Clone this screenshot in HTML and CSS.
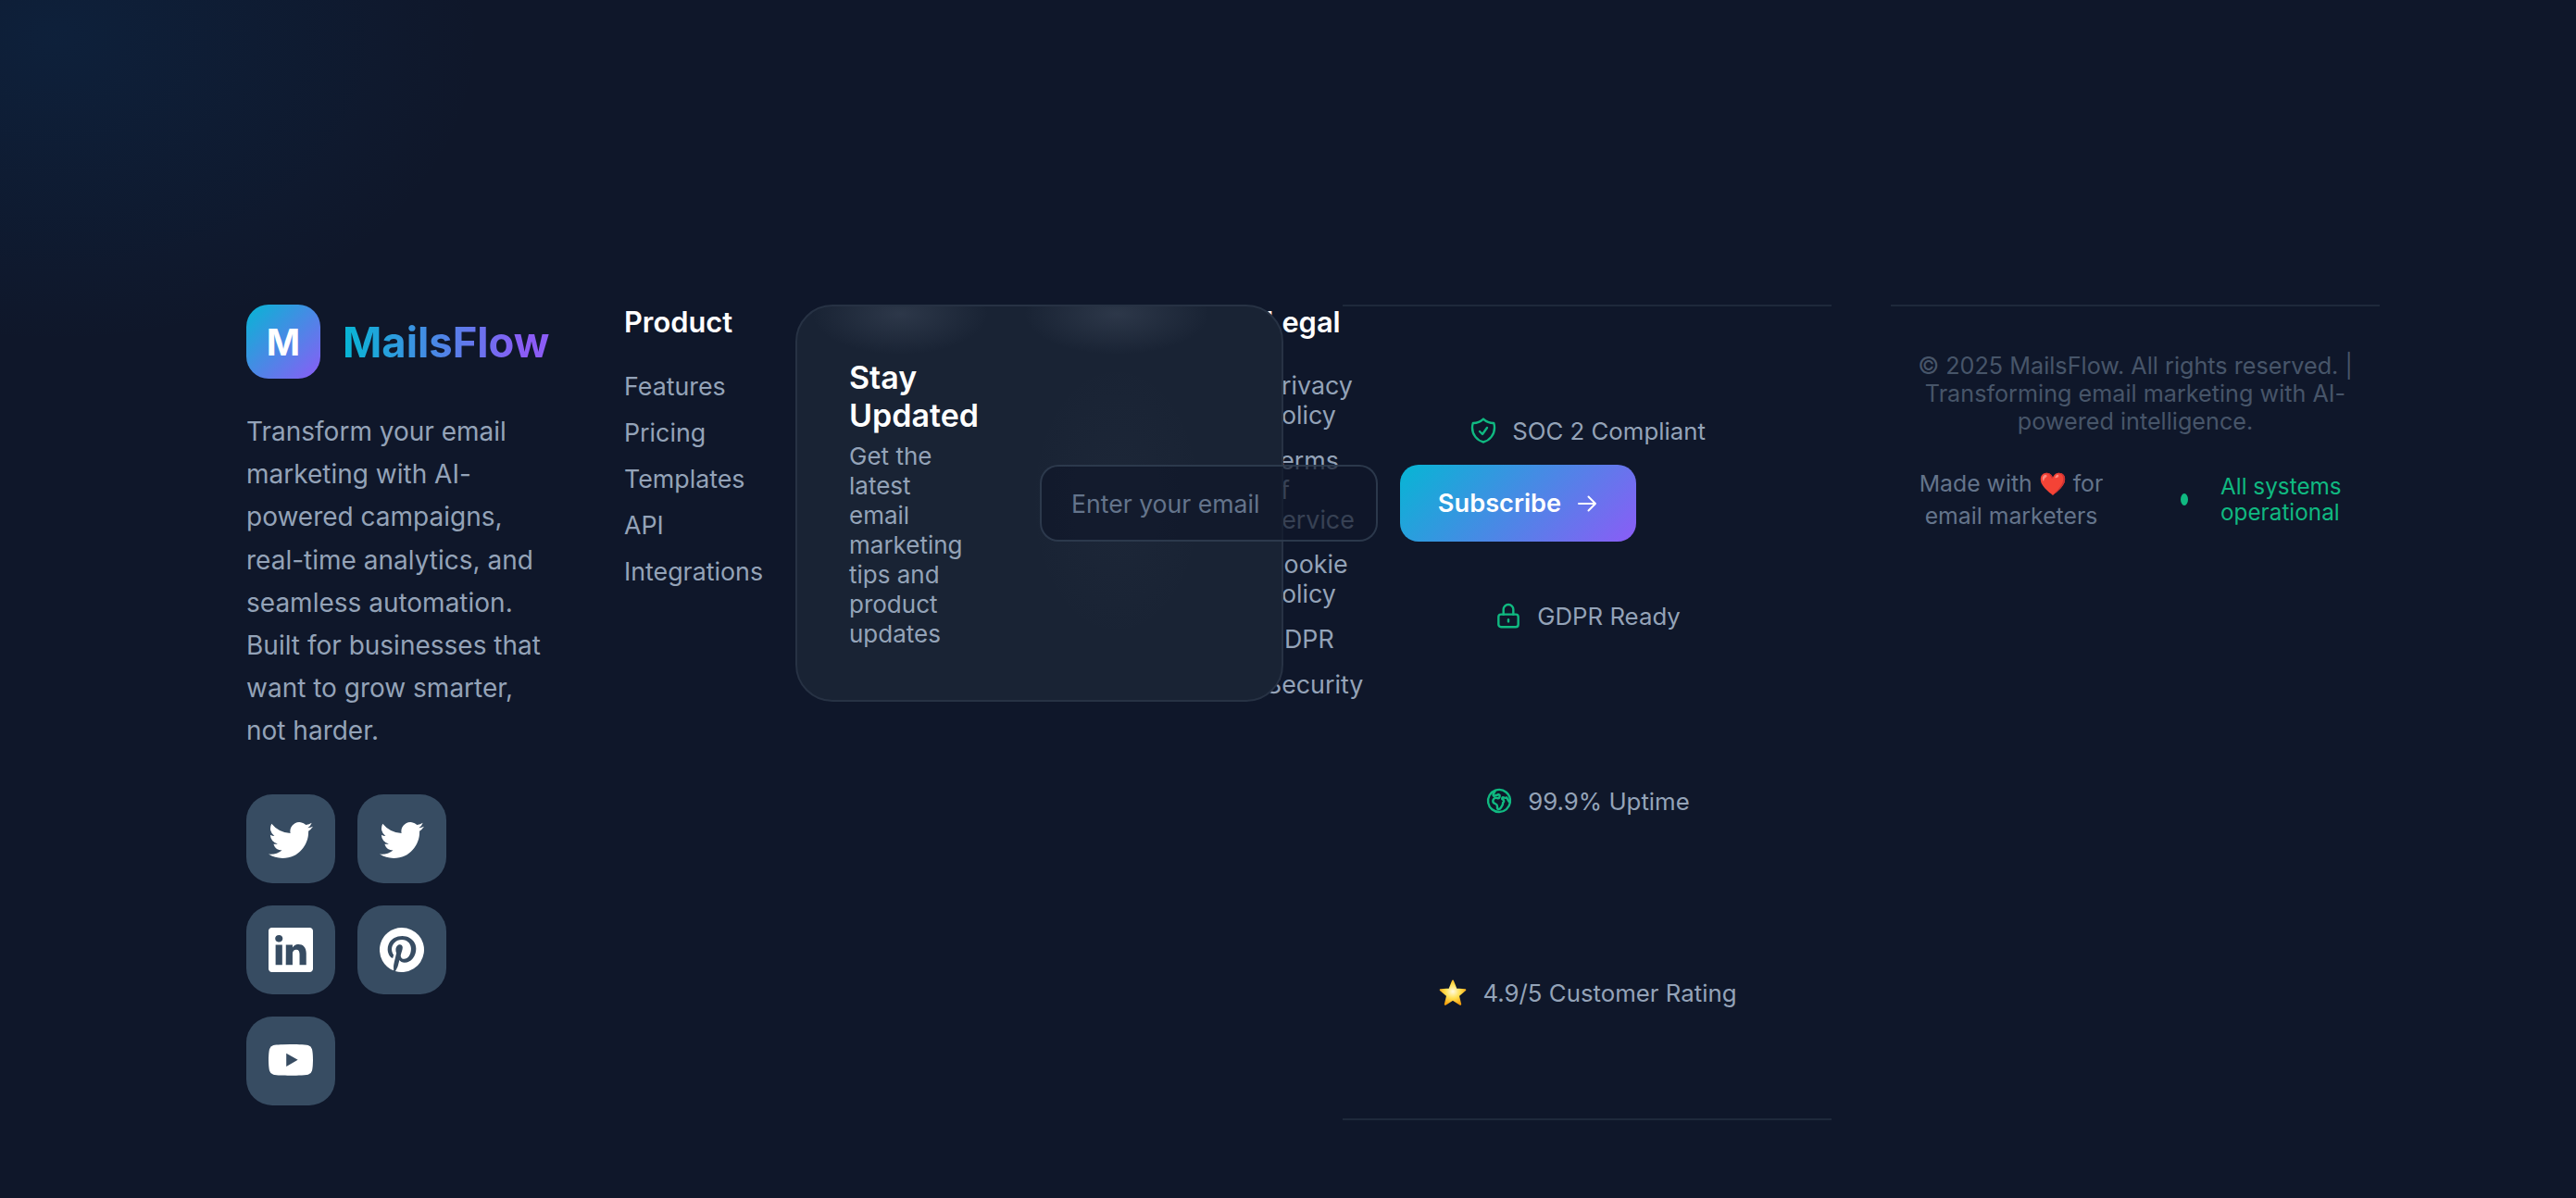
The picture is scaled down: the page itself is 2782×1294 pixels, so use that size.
FILE: index.html
```html
<!DOCTYPE html>
<html>
<head>
    <meta name="viewport" content="width=device-width, initial-scale=1.0">
    <title>MailsFlow Footer</title>
    <link rel="stylesheet" href="styles.css">
</head>
<body>
    <footer class="footer">
        <div class="footer-grid">
            <div class="brand">
                <div class="logo">
                    <div class="logo-mark">M</div>
                    <span class="logo-text">MailsFlow</span>
                </div>
                <p class="brand-copy">Transform your email marketing with AI-powered campaigns, real-time analytics, and seamless automation. Built for businesses that want to grow smarter, not harder.</p>
                <div class="socials">
                    <a class="social" href="#"><svg viewBox="0 0 16 16"><path d="M5.026 15c6.038 0 9.341-5.003 9.341-9.334 0-.14 0-.282-.006-.422A6.685 6.685 0 0 0 16 3.542a6.658 6.658 0 0 1-1.889.518 3.301 3.301 0 0 0 1.447-1.817 6.533 6.533 0 0 1-2.087.793A3.286 3.286 0 0 0 7.875 6.03a9.325 9.325 0 0 1-6.767-3.429 3.289 3.289 0 0 0 1.018 4.382A3.323 3.323 0 0 1 .64 6.575v.045a3.288 3.288 0 0 0 2.632 3.218 3.203 3.203 0 0 1-.865.115 3.23 3.23 0 0 1-.614-.057 3.283 3.283 0 0 0 3.067 2.277A6.588 6.588 0 0 1 .78 13.58a6.32 6.32 0 0 1-.78-.045A9.344 9.344 0 0 0 5.026 15z"/></svg></a>
                    <a class="social" href="#"><svg viewBox="0 0 16 16"><path d="M5.026 15c6.038 0 9.341-5.003 9.341-9.334 0-.14 0-.282-.006-.422A6.685 6.685 0 0 0 16 3.542a6.658 6.658 0 0 1-1.889.518 3.301 3.301 0 0 0 1.447-1.817 6.533 6.533 0 0 1-2.087.793A3.286 3.286 0 0 0 7.875 6.03a9.325 9.325 0 0 1-6.767-3.429 3.289 3.289 0 0 0 1.018 4.382A3.323 3.323 0 0 1 .64 6.575v.045a3.288 3.288 0 0 0 2.632 3.218 3.203 3.203 0 0 1-.865.115 3.23 3.23 0 0 1-.614-.057 3.283 3.283 0 0 0 3.067 2.277A6.588 6.588 0 0 1 .78 13.58a6.32 6.32 0 0 1-.78-.045A9.344 9.344 0 0 0 5.026 15z"/></svg></a>
                    <a class="social" href="#"><svg viewBox="0 0 16 16"><path d="M0 1.146C0 .513.526 0 1.175 0h13.65C15.474 0 16 .513 16 1.146v13.708c0 .633-.526 1.146-1.175 1.146H1.175C.526 16 0 15.487 0 14.854V1.146zm4.943 12.248V6.169H2.542v7.225h2.401zm-1.2-8.212c.837 0 1.358-.554 1.358-1.248-.015-.709-.52-1.248-1.342-1.248-.822 0-1.359.54-1.359 1.248 0 .694.521 1.248 1.327 1.248h.016zm4.908 8.212V9.359c0-.216.016-.432.08-.586.173-.431.568-.878 1.232-.878.869 0 1.216.662 1.216 1.634v3.865h2.401V9.25c0-2.22-1.184-3.252-2.764-3.252-1.274 0-1.845.7-2.165 1.193v.025h-.016a5.54 5.54 0 0 1 .016-.025V6.169h-2.4c.03.678 0 7.225 0 7.225h2.4z"/></svg></a>
                    <a class="social" href="#"><svg viewBox="0 0 16 16"><path d="M8 0a8 8 0 0 0-2.915 15.452c-.07-.633-.134-1.606.027-2.297.146-.625.938-3.977.938-3.977s-.239-.479-.239-1.187c0-1.113.645-1.943 1.448-1.943.682 0 1.012.512 1.012 1.127 0 .686-.437 1.712-.663 2.663-.188.796.4 1.446 1.185 1.446 1.422 0 2.515-1.5 2.515-3.664 0-1.915-1.377-3.254-3.342-3.254-2.276 0-3.612 1.707-3.612 3.471 0 .688.265 1.425.595 1.826a.24.24 0 0 1 .056.23c-.061.252-.196.796-.222.907-.035.146-.116.177-.268.107-1-.465-1.624-1.926-1.624-3.1 0-2.523 1.834-4.84 5.286-4.84 2.775 0 4.932 1.977 4.932 4.62 0 2.757-1.739 4.976-4.151 4.976-.811 0-1.573-.421-1.834-.919l-.498 1.902c-.181.695-.669 1.566-.995 2.097A8 8 0 1 0 8 0z"/></svg></a>
                    <a class="social" href="#"><svg viewBox="0 0 16 16"><path d="M8.051 1.999h.089c.822.003 4.987.033 6.11.335a2.01 2.01 0 0 1 1.415 1.42c.101.38.172.883.22 1.402l.01.104.022.26.008.104c.065.914.073 1.77.074 1.957v.075c-.001.194-.01 1.108-.082 2.06l-.008.105-.009.104c-.05.572-.124 1.14-.235 1.558a2.007 2.007 0 0 1-1.415 1.42c-1.16.312-5.569.334-6.18.335h-.142c-.309 0-1.587-.006-2.927-.052l-.17-.006-.087-.004-.171-.007-.171-.007c-1.11-.049-2.167-.128-2.654-.26a2.007 2.007 0 0 1-1.415-1.419c-.111-.417-.185-.986-.235-1.558L.09 9.82l-.008-.104A31.4 31.4 0 0 1 0 7.68v-.123c.002-.215.01-.958.064-1.778l.007-.103.003-.052.008-.104.022-.26.01-.104c.048-.519.119-1.023.22-1.402a2.007 2.007 0 0 1 1.415-1.42c.487-.13 1.544-.21 2.654-.26l.17-.007.172-.006.086-.003.171-.007A99.788 99.788 0 0 1 7.858 2h.193zM6.4 5.209v4.818l4.157-2.408L6.4 5.209z"/></svg></a>
                </div>
            </div>

            <nav class="links links-product">
                <h4>Product</h4>
                <a href="#">Features</a>
                <a href="#">Pricing</a>
                <a href="#">Templates</a>
                <a href="#">API</a>
                <a href="#">Integrations</a>
            </nav>

            <nav class="links links-legal">
                <h4>Legal</h4>
                <a href="#">Privacy Policy</a>
                <a href="#">Terms of Service</a>
                <a href="#">Cookie Policy</a>
                <a href="#">GDPR</a>
                <a href="#">Security</a>
            </nav>

            <section class="newsletter">
                <div class="newsletter-copy">
                    <h3>Stay Updated</h3>
                    <p>Get the latest email marketing tips and product updates</p>
                </div>
                <input class="newsletter-input" type="email" placeholder="Enter your email">
                <button class="newsletter-btn" type="button">
                    Subscribe
                    <svg viewBox="0 0 24 24"><path d="M13.5 4.5 21 12m0 0-7.5 7.5M21 12H3"/></svg>
                </button>
            </section>

            <section class="trust">
                <div class="trust-item trust-soc">
                    <svg class="trust-icon" viewBox="0 0 24 24"><path d="M9 12.75 11.25 15 15 9.75m-3-7.036A11.959 11.959 0 0 1 3.598 6 11.99 11.99 0 0 0 3 9.749c0 5.592 3.824 10.29 9 11.623 5.176-1.332 9-6.03 9-11.622 0-1.31-.21-2.571-.598-3.751h-.152c-3.196 0-6.1-1.248-8.25-3.285Z"/></svg>
                    <span>SOC 2 Compliant</span>
                </div>
                <div class="trust-item trust-gdpr">
                    <svg class="trust-icon" viewBox="0 0 24 24"><rect x="4" y="11" width="16" height="10.2" rx="2"/><path d="M8 11V7a4 4 0 0 1 8 0v4"/><path d="M12 15.2v1.6"/></svg>
                    <span>GDPR Ready</span>
                </div>
                <div class="trust-item trust-uptime">
                    <svg class="trust-icon" viewBox="0 0 24 24"><path d="m20.893 13.393-1.135-1.135a2.252 2.252 0 0 1-.421-.585l-1.08-2.16a.414.414 0 0 0-.663-.107.827.827 0 0 1-.812.21l-1.273-.363a.89.89 0 0 0-.738 1.595l.587.39c.59.395.674 1.23.172 1.732l-.2.2c-.212.212-.33.498-.33.796v.41c0 .409-.11.809-.32 1.158l-1.315 2.191a2.11 2.11 0 0 1-1.81 1.025 1.055 1.055 0 0 1-1.055-1.055v-1.172c0-.92-.56-1.747-1.414-2.089l-.655-.261a2.25 2.25 0 0 1-1.383-2.46l.007-.042a2.25 2.25 0 0 1 .29-.787l.09-.15a2.25 2.25 0 0 1 2.37-1.048l1.178.236a1.125 1.125 0 0 0 1.302-.795l.208-.73a1.125 1.125 0 0 0-.578-1.315l-.665-.332-.091.091a2.25 2.25 0 0 1-1.591.659h-.18c-.249 0-.487.1-.662.274a.931.931 0 0 1-1.458-1.137l1.411-2.353a2.25 2.25 0 0 0 .286-.76m11.928 9.869A9 9 0 0 0 8.965 3.525m11.928 9.868A9 9 0 1 1 8.965 3.525"/></svg>
                    <span>99.9% Uptime</span>
                </div>
                <div class="trust-item trust-rating">
                    <svg class="trust-star" viewBox="0 0 32 32">
                        <defs>
                            <radialGradient id="star-fill" cx="0.5" cy="0.45" r="0.6">
                                <stop offset="0" stop-color="#fffbe0"/>
                                <stop offset="0.5" stop-color="#ffdf50"/>
                                <stop offset="1" stop-color="#f59e0b"/>
                            </radialGradient>
                        </defs>
                        <path d="M16 3.5 19.6 12.5 29.3 13.2 21.9 19.4 24.2 28.8 16 23.7 7.8 28.8 10.1 19.4 2.7 13.2 12.4 12.5Z"/>
                    </svg>
                    <span>4.9/5 Customer Rating</span>
                </div>
            </section>

            <section class="bottom">
                <p class="copyright">© 2025 MailsFlow. All rights reserved. | Transforming email marketing with AI-powered intelligence.</p>
                <div class="bottom-row">
                    <p class="made-with">Made with <span class="heart">❤️</span> for email marketers</p>
                    <div class="status">
                        <span class="status-dot"></span>
                        <span>All systems operational</span>
                    </div>
                </div>
            </section>
        </div>
    </footer>
</body>
</html>
```

FILE: styles.css
```css
* {
    box-sizing: border-box;
}

body {
    margin: 0;
    min-height: 1294px;
    background-color: #0f172a;
    background-image: radial-gradient(ellipse 460px 330px at 60px 40px, rgba(6, 100, 180, 0.12), transparent);
    font-family: "Inter", "Noto Sans", sans-serif;
    color: #94a3b8;
}

.footer {
    padding: 329px 0 86px 266px;
}

/* tracks are cut so the newsletter sits over the link columns */
.footer-grid {
    display: grid;
    grid-template-columns: 408px 185px 508px 19px 64px 528px 64px 528px;
    align-items: start;
}

.brand {
    grid-column: 1;
    grid-row: 1;
}

.logo {
    display: flex;
    align-items: center;
    gap: 24px;
}

.logo-mark {
    width: 80px;
    height: 80px;
    border-radius: 24px;
    background: linear-gradient(135deg, #06b6d4, #8b5cf6);
    display: flex;
    align-items: center;
    justify-content: center;
    color: #fff;
    font-size: 39px;
    font-weight: 700;
}

.logo-text {
    font-size: 45.4px;
    font-weight: 700;
    background: linear-gradient(90deg, #06b6d4, #8b5cf6 88%);
    -webkit-background-clip: text;
    background-clip: text;
    color: transparent;
}

.brand-copy {
    width: 326px;
    margin: 34px 0 45px;
    font-size: 28px;
    line-height: 46.2px;
}

.socials {
    display: flex;
    flex-wrap: wrap;
    gap: 24px;
    width: 240px;
}

.social {
    width: 96px;
    height: 96px;
    border-radius: 28px;
    background: #374c62;
    display: flex;
    align-items: center;
    justify-content: center;
}

.social svg {
    width: 48px;
    height: 48px;
    fill: #fff;
}

.links {
    display: flex;
    flex-direction: column;
    grid-row: 1;
}

.links h4 {
    margin: 0 0 34px;
    color: #fff;
    font-size: 30.8px;
    font-weight: 600;
    line-height: 38px;
}

.links a {
    margin-bottom: 18px;
    color: #94a3b8;
    font-size: 26.8px;
    line-height: 32px;
    text-decoration: none;
}

.links-product {
    grid-column: 2;
}

.links-legal {
    grid-column: 4;
    width: 104px;
}

.links-legal h4 {
    margin-bottom: 33px;
}

.links-legal a {
    margin-bottom: 16.7px;
}

.newsletter {
    grid-column: 3 / 5;
    grid-row: 1;
    z-index: 2;
    height: 429px;
    padding: 0 56px;
    display: flex;
    align-items: center;
    gap: 24px;
    background:
        radial-gradient(ellipse 95px 44px at 111px 8px, rgba(148, 163, 184, 0.16), transparent),
        radial-gradient(ellipse 100px 44px at 345px 8px, rgba(148, 163, 184, 0.16), transparent),
        radial-gradient(ellipse 95px 150px at 345px 210px, rgba(148, 163, 184, 0.03), transparent),
        #192334;
    border: 2px solid #273244;
    border-radius: 40px;
}

.newsletter-copy {
    flex: none;
    width: 139px;
    margin-right: 43px;
}

.newsletter-copy h3 {
    margin: 0;
    color: #fff;
    font-size: 34px;
    font-weight: 600;
    line-height: 41px;
}

.newsletter-copy p {
    width: 130px;
    margin: 8px 0 0;
    font-size: 26px;
    line-height: 32px;
}

.newsletter-input {
    flex: none;
    width: 365px;
    height: 83px;
    padding: 0 32px;
    background: rgba(15, 23, 42, 0.7);
    border: 2px solid rgba(51, 65, 85, 0.8);
    border-radius: 20px;
    font-family: inherit;
    font-size: 26.6px;
    color: #fff;
}

.newsletter-input::placeholder {
    color: #64748b;
    opacity: 1;
}

.newsletter-btn {
    flex: none;
    width: 255px;
    height: 83px;
    display: flex;
    align-items: center;
    justify-content: center;
    gap: 16px;
    border: none;
    border-radius: 20px;
    background: linear-gradient(135deg, #06b6d4, #8b5cf6);
    color: #fff;
    font-family: inherit;
    font-size: 27.2px;
    font-weight: 600;
}

.newsletter-btn svg {
    width: 24px;
    height: 24px;
    fill: none;
    stroke: #fff;
    stroke-width: 2;
    stroke-linecap: round;
    stroke-linejoin: round;
}

.trust {
    grid-column: 6;
    grid-row: 1;
    height: 881px;
    border-top: 2px solid #1e293b;
    border-bottom: 2px solid #1e293b;
    padding-top: 117px;
    display: flex;
    flex-direction: column;
    align-items: center;
    font-size: 25.8px;
}

.trust-item {
    display: flex;
    align-items: center;
    gap: 15px;
    height: 34px;
}

.trust-gdpr,
.trust-uptime {
    margin-top: 166px;
}

.trust-rating {
    margin-top: 173px;
    gap: 17px;
}

.trust-icon {
    width: 32px;
    height: 32px;
    fill: none;
    stroke: #10b981;
    stroke-width: 1.8;
    stroke-linecap: round;
    stroke-linejoin: round;
}

.trust-star {
    width: 32px;
    height: 32px;
    fill: url(#star-fill);
    stroke: url(#star-fill);
    stroke-width: 2;
    stroke-linejoin: round;
}

.bottom {
    grid-column: 8;
    grid-row: 1;
    border-top: 2px solid #1e293b;
    padding: 49px 24px 0;
    text-align: center;
    color: #475569;
    font-size: 25.2px;
    line-height: 30px;
}

.copyright {
    margin: 0;
}

.bottom-row {
    display: flex;
    align-items: center;
    margin-top: 35px;
}

.made-with {
    flex: none;
    width: 212px;
    margin: 0 77px 0 0;
    color: #64748b;
    font-size: 24.8px;
    line-height: 35px;
}

.heart {
    font-size: 24px;
}

.status {
    display: flex;
    align-items: center;
    gap: 35px;
    margin-bottom: 2px;
    color: #10b981;
    font-size: 24.3px;
    line-height: 28px;
    text-align: left;
}

.status-dot {
    flex: none;
    width: 8px;
    height: 13px;
    border-radius: 50%;
    background: #10b981;
}
```
